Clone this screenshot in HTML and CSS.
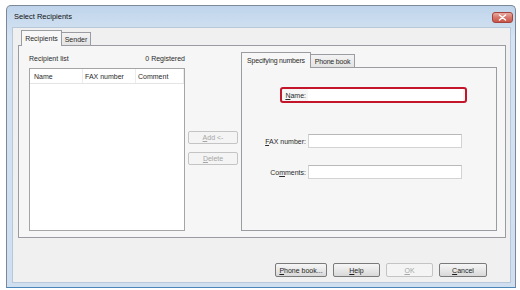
FILE: index.html
```html
<!DOCTYPE html>
<html lang="en">
<head>
    <meta charset="UTF-8">
    <title>Select Recipients</title>
    <link rel="stylesheet" href="styles.css">
</head>
<body>
    <div class="window">
        <!-- Title bar -->
        <div class="titlebar">
            <span class="title">Select Recipients</span>
            <span class="close">
                <svg width="9" height="7" viewBox="0 0 9 7"><path d="M1.5 1 L7.5 6 M7.5 1 L1.5 6" stroke="#fff" stroke-width="1.5" stroke-linecap="round"/></svg>
            </span>
        </div>

        <div class="client">
            <div class="tabs outer-tabs">
                <span class="tab active">Recipients</span>
                <span class="tab">Sender</span>
            </div>

            <div class="panel outer-panel">
                <!-- Recipient list -->
                <div class="list-col">
                    <div class="list-head">
                        <span>Recipient list</span>
                        <span>0 Registered</span>
                    </div>
                    <div class="listview">
                        <div class="lv-header">
                            <span class="col col-name">Name</span>
                            <span class="col col-fax">FAX number</span>
                            <span class="col col-comment">Comment</span>
                        </div>
                    </div>
                </div>

                <div class="mid-col">
                    <button class="btn small" disabled><u>A</u>dd &lt;-</button>
                    <button class="btn small" disabled><u>D</u>elete</button>
                </div>

                <!-- Specifying numbers -->
                <div class="right-col">
                    <div class="tabs inner-tabs">
                        <span class="tab active">Specifying numbers</span>
                        <span class="tab">Phone book</span>
                    </div>
                    <div class="panel inner-panel">
                        <div class="field name-field">
                            <label><u>N</u>ame:</label>
                            <span class="input"></span>
                        </div>
                        <div class="field fax-field">
                            <label><u>F</u>AX number:</label>
                            <span class="input"></span>
                        </div>
                        <div class="field comment-field">
                            <label>Co<u>m</u>ments:</label>
                            <span class="input"></span>
                        </div>
                    </div>
                </div>
            </div>

            <div class="buttons">
                <button class="btn phone"><u>P</u>hone book...</button>
                <button class="btn"><u>H</u>elp</button>
                <button class="btn" disabled><u>O</u>K</button>
                <button class="btn cancel"><u>C</u>ancel</button>
            </div>
        </div>
    </div>
</body>
</html>
```

FILE: styles.css
```css
* {
    margin: 0;
    padding: 0;
    box-sizing: border-box;
}

body {
    font-family: "Liberation Sans", Arial, sans-serif;
    font-size: 7px;
    color: #2b2b2b;
    background: #fff;
}

u {
    text-decoration: underline;
    text-underline-offset: 1px;
}

/* Window frame */
.window {
    margin: 5px 0 0 6px;
    width: 510px;
    height: 283px;
    border: 1px solid #7a8898;
    border-bottom-color: #4b86b8;
    border-radius: 5px 5px 0 0;
    padding: 0 4px 4px 5px;
    background: linear-gradient(#bfd4eb, #d5e3f2 30px, #cfdff0);
    display: flex;
    flex-direction: column;
}

.titlebar {
    height: 21px;
    display: flex;
    align-items: center;
    justify-content: space-between;
}

.title {
    padding-left: 2px;
    font-size: 7.5px;
    color: #111;
}

.close {
    width: 21px;
    height: 11px;
    margin-right: -2px;
    margin-top: 2px;
    border: 1px solid #a4453d;
    border-radius: 3px;
    background: linear-gradient(#eaaaa1, #d7776b 50%, #c95547);
    display: flex;
    align-items: center;
    justify-content: center;
}

.client {
    flex: 1;
    background: #f0f0f0;
    border: 1px solid #b8c8da;
    padding: 2px 4px 0 5px;
}

/* Tabs */
.tabs {
    display: flex;
    align-items: flex-end;
    height: 15px;
    position: relative;
    z-index: 1;
}

.outer-tabs {
    padding-left: 3px;
}

.tab {
    height: 13px;
    padding: 0 2px;
    display: flex;
    align-items: center;
    justify-content: center;
    white-space: nowrap;
    border: 1px solid #9a9ca2;
    border-bottom: none;
    background: linear-gradient(#f3f3f3, #e3e3e3);
}

.tab.active {
    height: 16px;
    margin-bottom: -1px;
    background: #f7f7f7;
    padding-bottom: 1px;
}

.tab + .tab {
    border-left: none;
}

.outer-tabs .tab.active { width: 41px; }
.outer-tabs .tab { width: 29px; }
.inner-tabs .tab.active { width: 70px; }
.inner-tabs .tab { width: 44px; letter-spacing: -0.2px; }

.panel {
    border: 1px solid #9a9ca2;
    background: #f6f6f6;
}

.outer-panel {
    height: 193px;
    display: flex;
    padding: 6px 0 6px 10px;
}

/* Recipient list */
.list-col {
    width: 156px;
    display: flex;
    flex-direction: column;
}

.list-head {
    height: 12px;
    margin-bottom: 4px;
    display: flex;
    justify-content: space-between;
    align-items: center;
}

.listview {
    flex: 1;
    background: #fff;
    border: 1px solid #a5a5a5;
}

.lv-header {
    height: 15px;
    display: flex;
    align-items: center;
    border-bottom: 1px solid #e4e4e4;
}

.col {
    height: 100%;
    display: flex;
    align-items: center;
    border-right: 1px solid #ececec;
}

.col-name { width: 53px; padding-left: 4px; }
.col-fax { width: 53px; padding-left: 2px; }
.col-comment { width: 48px; padding-left: 2px; }

.mid-col {
    width: 50px;
    margin-left: 3px;
    padding-top: 79px;
    display: flex;
    flex-direction: column;
    gap: 8px;
}

/* Buttons */
.btn {
    font-family: inherit;
    font-size: 7px;
    color: #1e1e1e;
    height: 14px;
    width: 47px;
    border: 1px solid #7a7a7a;
    border-radius: 2px;
    background: linear-gradient(#f6f6f6, #e8e8e8 50%, #d8d8d8);
}

.btn:disabled {
    color: #a6a6a6;
    border-color: #c4c4c4;
    background: #f4f4f4;
}

.btn.small {
    width: 50px;
    height: 13px;
}

.btn.phone { width: 52px; }
.btn.cancel { width: 48px; }

/* Specifying numbers */
.right-col {
    width: 256px;
    margin-left: 3px;
    display: flex;
    flex-direction: column;
}

.inner-panel {
    flex: 1;
    padding-top: 19px;
}

.field {
    display: flex;
    align-items: center;
    gap: 2px;
    margin-left: 16px;
}

.field label {
    width: 48px;
    text-align: right;
}

.input {
    display: block;
    width: 154px;
    height: 14px;
    background: #fff;
    border: 1px solid #d3d3d3;
    border-top-color: #b9b9b9;
}

.name-field {
    margin-left: 38px;
    width: 187px;
    border: 2px solid #c3162b;
    border-radius: 3px;
    padding-right: 2px;
}

.name-field label {
    width: 24px;
}

.name-field .input {
    width: 155px;
    height: 12px;
    border: none;
}

.fax-field {
    margin-top: 31px;
}

.comment-field {
    margin-top: 17px;
}

.buttons {
    display: flex;
    justify-content: flex-end;
    gap: 6px;
    padding: 25px 19px 0 0;
}
```
